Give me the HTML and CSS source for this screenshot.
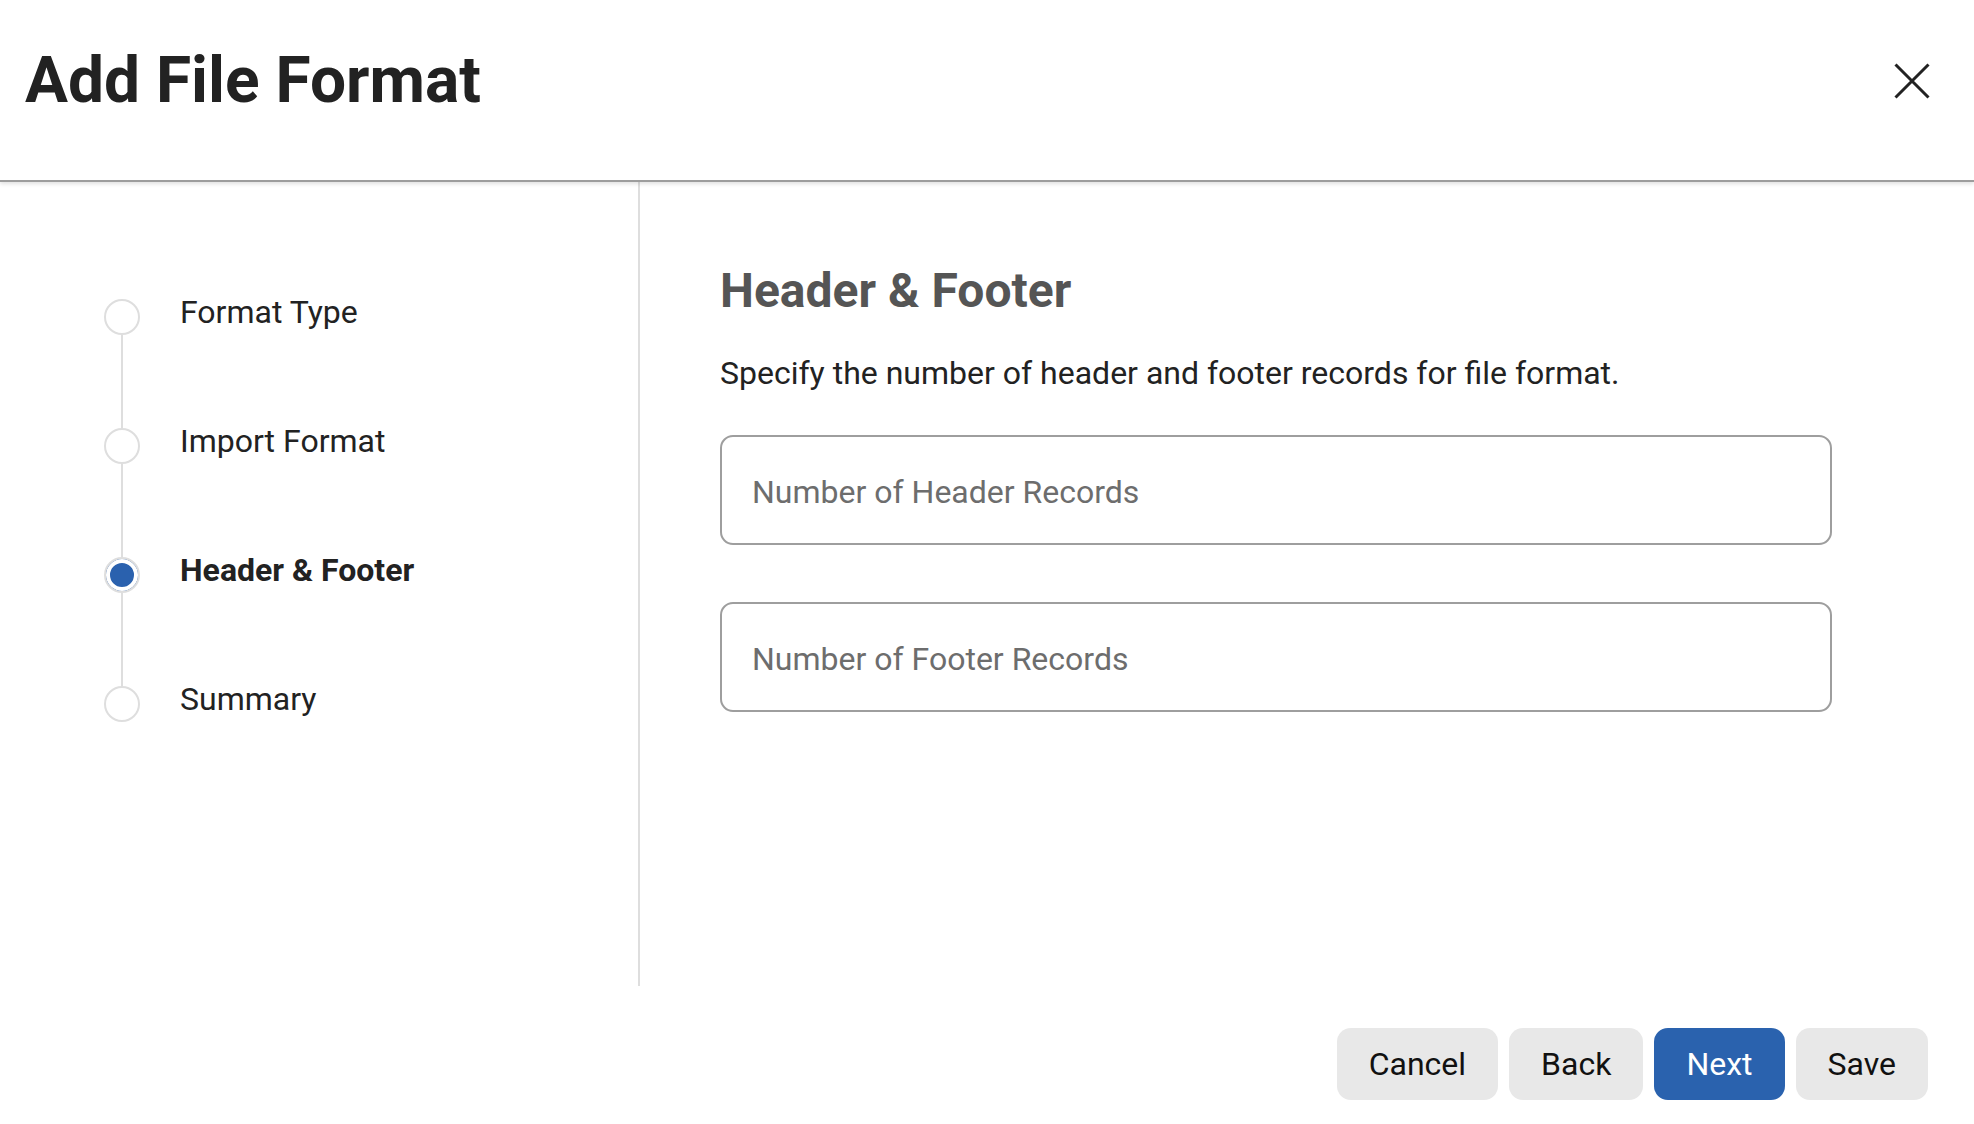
FILE: index.html
```html
<!DOCTYPE html>
<html lang="en">
<head>
<meta charset="utf-8">
<title>Add File Format</title>
<link rel="stylesheet" href="styles.css">
</head>
<body>
<div class="dialog">
  <header class="dlg-header">
    <h1 class="dlg-title">Add File Format</h1>
    <button class="close-btn" aria-label="Close">
      <svg viewBox="0 0 36 36" width="36" height="36"><path d="M1.5 1.5 L34.5 34.5 M34.5 1.5 L1.5 34.5" stroke="#222" stroke-width="3" fill="none"/></svg>
    </button>
  </header>
  <div class="dlg-body">
    <nav class="steps">
      <div class="step">
        <div class="marker"><span class="dot"></span><span class="line"></span></div>
        <span class="label">Format Type</span>
      </div>
      <div class="step">
        <div class="marker"><span class="dot"></span><span class="line"></span></div>
        <span class="label">Import Format</span>
      </div>
      <div class="step active">
        <div class="marker"><span class="dot"></span><span class="line"></span></div>
        <span class="label">Header &amp; Footer</span>
      </div>
      <div class="step last">
        <div class="marker"><span class="dot"></span></div>
        <span class="label">Summary</span>
      </div>
    </nav>
    <section class="content">
      <h2 class="section-title">Header &amp; Footer</h2>
      <p class="section-desc">Specify the number of header and footer records for file format.</p>
      <input class="field" type="text" placeholder="Number of Header Records">
      <input class="field field-2" type="text" placeholder="Number of Footer Records">
    </section>
  </div>
  <footer class="dlg-footer">
    <button class="btn">Cancel</button>
    <button class="btn">Back</button>
    <button class="btn btn-primary">Next</button>
    <button class="btn">Save</button>
  </footer>
</div>
</body>
</html>
```
FILE: styles.css
```css
* { box-sizing: border-box; }
html, body { margin: 0; padding: 0; background: #fff; }
body { font-family: Roboto, "Noto Sans", Arial, sans-serif; color: #222; }

.dialog {
  height: 100vh;
  display: flex;
  flex-direction: column;
}

.dlg-header {
  height: 182px;
  flex: none;
  display: flex;
  justify-content: space-between;
  align-items: flex-start;
  padding: 43px 44px 0 25px;
  border-bottom: 2px solid #9d9d9d;
  box-shadow: 0 2px 4px rgba(0,0,0,0.12);
  position: relative;
  z-index: 1;
}
.dlg-title {
  margin: 0;
  font-size: 64px;
  font-weight: 700;
  line-height: 75px;
  color: #222;
}
.close-btn {
  margin-top: 20px;
  padding: 0;
  border: 0;
  background: none;
  width: 36px;
  height: 36px;
  cursor: pointer;
}
.close-btn svg { display: block; }

.dlg-body {
  flex: 1;
  display: flex;
  min-height: 0;
}

.steps {
  width: 640px;
  flex: none;
  border-right: 2px solid #dedede;
  padding: 117px 0 0 104px;
}
.step {
  display: flex;
  align-items: flex-start;
  gap: 40px;
  height: 129px;
}
.step.last { height: auto; }
.marker {
  width: 36px;
  height: 100%;
  display: flex;
  flex-direction: column;
  align-items: center;
}
.dot {
  width: 36px;
  height: 36px;
  flex: none;
  border-radius: 50%;
  border: 2px solid #dedede;
  background: #fff;
}
.step.active .dot {
  background: #2a61ae;
  box-shadow: inset 0 0 0 4px #fff;
}
.line {
  flex: 1;
  width: 2px;
  background: #dedede;
}
.label {
  font-size: 32px;
  line-height: 27px;
  color: #222;
  white-space: nowrap;
}
.step.active .label { font-weight: 700; }

.content {
  flex: 1;
  padding: 81px 142px 0 80px;
}
.section-title {
  margin: 0;
  font-size: 48px;
  line-height: 56px;
  font-weight: 700;
  color: #555;
}
.section-desc {
  margin: 36px 0 0;
  font-size: 32px;
  line-height: 37px;
  color: #222;
}
.field {
  display: block;
  width: 100%;
  height: 110px;
  margin-top: 43px;
  border: 2px solid #9e9e9e;
  border-radius: 13px;
  padding: 4px 30px 0;
  font-family: inherit;
  font-size: 32px;
  color: #222;
  background: #fff;
  outline: none;
}
.field-2 { margin-top: 57px; }
.field::placeholder { color: #6d6d6d; opacity: 1; }

.dlg-footer {
  flex: none;
  height: 138px;
  display: flex;
  justify-content: flex-end;
  align-items: flex-start;
  gap: 11px;
  padding: 42px 46px 0 0;
}
.btn {
  height: 72px;
  padding: 0 32px;
  border: 0;
  border-radius: 14px;
  background: #e8e8e8;
  color: #111;
  font-family: inherit;
  font-size: 32px;
  cursor: pointer;
}
.btn-primary {
  background: #2a62ae;
  color: #fff;
}
```
